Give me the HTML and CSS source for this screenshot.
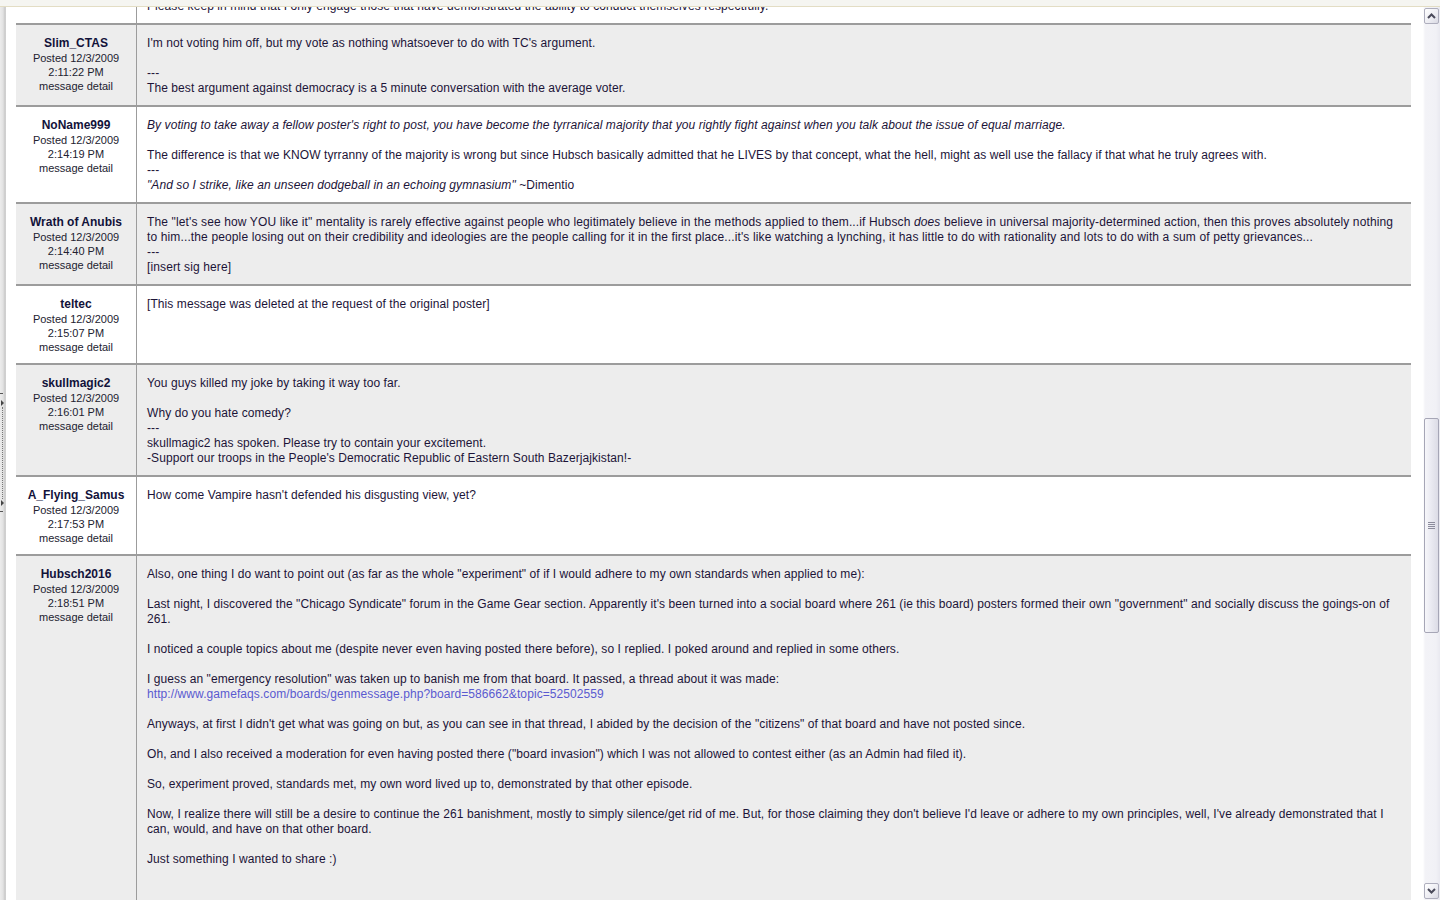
FILE: index.html
```html
<!DOCTYPE html>
<html>
<head>
<meta charset="utf-8">
<title>Board Messages</title>
<link rel="stylesheet" href="styles.css">
</head>
<body>
<div class="window">
  <div class="topbar"></div>
  <div class="main">
    <div class="gutter">
      <div class="grip">
        <span class="grip-dash"></span>
        <span class="grip-arrow"></span>
        <span class="grip-dots"></span>
        <span class="grip-arrow"></span>
        <span class="grip-dash"></span>
      </div>
    </div>
    <div class="content">
      <div class="board">
        <div class="post post-first">
          <div class="author"></div>
          <div class="msg">Please keep in mind that I only engage those that have demonstrated the ability to conduct themselves respectfully.</div>
        </div>

        <div class="post alt">
          <div class="author">
            <div class="name">Slim_CTAS</div>
            <div class="meta">Posted 12/3/2009</div>
            <div class="meta">2:11:22 PM</div>
            <div class="meta">message detail</div>
          </div>
          <div class="msg">I'm not voting him off, but my vote as nothing whatsoever to do with TC's argument.<br><br>---<br>The best argument against democracy is a 5 minute conversation with the average voter.</div>
        </div>

        <div class="post">
          <div class="author">
            <div class="name">NoName999</div>
            <div class="meta">Posted 12/3/2009</div>
            <div class="meta">2:14:19 PM</div>
            <div class="meta">message detail</div>
          </div>
          <div class="msg"><i>By voting to take away a fellow poster's right to post, you have become the tyrranical majority that you rightly fight against when you talk about the issue of equal marriage.</i><br><br>The difference is that we KNOW tyrranny of the majority is wrong but since Hubsch basically admitted that he LIVES by that concept, what the hell, might as well use the fallacy if that what he truly agrees with.<br>---<br><i>"And so I strike, like an unseen dodgeball in an echoing gymnasium"</i> ~Dimentio</div>
        </div>

        <div class="post alt">
          <div class="author">
            <div class="name">Wrath of Anubis</div>
            <div class="meta">Posted 12/3/2009</div>
            <div class="meta">2:14:40 PM</div>
            <div class="meta">message detail</div>
          </div>
          <div class="msg msg-wide">The "let's see how YOU like it" mentality is rarely effective against people who legitimately believe in the methods applied to them...if Hubsch <i>does</i> believe in universal majority-determined action, then this proves absolutely nothing to him...the people losing out on their credibility and ideologies are the people calling for it in the first place...it's like watching a lynching, it has little to do with rationality and lots to do with a sum of petty grievances...<br>---<br>[insert sig here]</div>
        </div>

        <div class="post">
          <div class="author">
            <div class="name">teltec</div>
            <div class="meta">Posted 12/3/2009</div>
            <div class="meta">2:15:07 PM</div>
            <div class="meta">message detail</div>
          </div>
          <div class="msg">[This message was deleted at the request of the original poster]</div>
        </div>

        <div class="post alt">
          <div class="author">
            <div class="name">skullmagic2</div>
            <div class="meta">Posted 12/3/2009</div>
            <div class="meta">2:16:01 PM</div>
            <div class="meta">message detail</div>
          </div>
          <div class="msg">You guys killed my joke by taking it way too far.<br><br>Why do you hate comedy?<br>---<br>skullmagic2 has spoken. Please try to contain your excitement.<br>-Support our troops in the People's Democratic Republic of Eastern South Bazerjajkistan!-</div>
        </div>

        <div class="post">
          <div class="author">
            <div class="name">A_Flying_Samus</div>
            <div class="meta">Posted 12/3/2009</div>
            <div class="meta">2:17:53 PM</div>
            <div class="meta">message detail</div>
          </div>
          <div class="msg">How come Vampire hasn't defended his disgusting view, yet?</div>
        </div>

        <div class="post alt post-last">
          <div class="author">
            <div class="name">Hubsch2016</div>
            <div class="meta">Posted 12/3/2009</div>
            <div class="meta">2:18:51 PM</div>
            <div class="meta">message detail</div>
          </div>
          <div class="msg">Also, one thing I do want to point out (as far as the whole "experiment" of if I would adhere to my own standards when applied to me):<br><br>Last night, I discovered the "Chicago Syndicate" forum in the Game Gear section. Apparently it's been turned into a social board where 261 (ie this board) posters formed their own "government" and socially discuss the goings-on of 261.<br><br>I noticed a couple topics about me (despite never even having posted there before), so I replied. I poked around and replied in some others.<br><br>I guess an "emergency resolution" was taken up to banish me from that board. It passed, a thread about it was made:<br><a href="#" class="link">http://www.gamefaqs.com/boards/genmessage.php?board=586662&amp;topic=52502559</a><br><br>Anyways, at first I didn't get what was going on but, as you can see in that thread, I abided by the decision of the "citizens" of that board and have not posted since.<br><br>Oh, and I also received a moderation for even having posted there ("board invasion") which I was not allowed to contest either (as an Admin had filed it).<br><br>So, experiment proved, standards met, my own word lived up to, demonstrated by that other episode.<br><br>Now, I realize there will still be a desire to continue the 261 banishment, mostly to simply silence/get rid of me. But, for those claiming they don't believe I'd leave or adhere to my own principles, well, I've already demonstrated that I can, would, and have on that other board.<br><br>Just something I wanted to share :)<br><br><br><br></div>
        </div>
      </div>
    </div>
    <div class="scrollbar">
      <div class="sb-btn">
        <svg width="9" height="6" viewBox="0 0 9 6"><path d="M1 5 L4.5 1.5 L8 5" fill="none" stroke="#4a4a5a" stroke-width="2"/></svg>
      </div>
      <div class="sb-track">
        <div class="sb-thumb">
          <span class="sb-grip"></span>
        </div>
      </div>
      <div class="sb-btn">
        <svg width="9" height="6" viewBox="0 0 9 6"><path d="M1 1 L4.5 4.5 L8 1" fill="none" stroke="#4a4a5a" stroke-width="2"/></svg>
      </div>
    </div>
  </div>
</div>
</body>
</html>
```

FILE: styles.css
```css
html, body {
  margin: 0;
  padding: 0;
  background: #ffffff;
}

body {
  font-family: "Liberation Sans", Arial, sans-serif;
  color: #1c1438;
}

.window {
  width: 1440px;
  height: 900px;
  display: flex;
  flex-direction: column;
  overflow: hidden;
}

.topbar {
  height: 6px;
  background: #f5f5f1;
  border-bottom: 1px solid #e3ddc4;
  flex: none;
}

.main {
  flex: 1;
  display: flex;
  min-height: 0;
}

.gutter {
  width: 6px;
  flex: none;
  background: linear-gradient(to right, #ececec 0, #e2e2e2 3px, #c9c9c9 5px, #d6d6d6 6px);
  display: flex;
  flex-direction: column;
}

.grip {
  margin-top: 386px;
  display: flex;
  flex-direction: column;
  align-items: flex-start;
}

.grip-dash {
  width: 3px;
  height: 1px;
  background: #555;
  margin-bottom: 6px;
}

.grip-arrow {
  width: 0;
  height: 0;
  margin-left: 1px;
  border-top: 3px solid transparent;
  border-bottom: 3px solid transparent;
  border-left: 3px solid #444;
}

.grip-dots {
  width: 0;
  height: 92px;
  margin-left: 2px;
  border-left: 1px dotted #777;
  margin-top: 1px;
  margin-bottom: 1px;
}

.grip-arrow + .grip-dash {
  margin-top: 5px;
  margin-bottom: 0;
}

.content {
  flex: 1;
  min-width: 0;
  overflow: hidden;
  padding: 0 12px 0 10px;
  background: #ffffff;
}

.board {
  margin-top: -19px;
}

.post {
  display: grid;
  grid-template-columns: 121px 1fr;
  border-top: 2px solid #9c9c9c;
  background: #ffffff;
}

.post.alt {
  background: #ededed;
}

.post-first {
  border-top: none;
}

.post-last {
  min-height: 420px;
}

.author {
  border-right: 1px solid #9c9c9c;
  padding: 11px 0 9px;
  text-align: center;
}

.name {
  font-size: 12px;
  font-weight: bold;
  line-height: 15px;
  color: #12123a;
}

.meta {
  font-size: 11px;
  line-height: 14px;
  color: #222230;
}

.msg {
  padding: 11px 10px 9px;
  font-size: 12px;
  line-height: 15px;
  letter-spacing: 0.08px;
  color: #1c1438;
}

.msg-wide {
  letter-spacing: 0.13px;
}

.link {
  color: #5a5ad0;
  text-decoration: none;
}

.scrollbar {
  width: 17px;
  flex: none;
  display: flex;
  flex-direction: column;
  padding: 1px 1px 1px 1px;
  box-sizing: border-box;
  background: linear-gradient(to right, #ffffff 0, #f3f3f7 2px, #f1f1f6 13px, #e9e9f0 17px);
}

.sb-btn {
  height: 16px;
  flex: none;
  box-sizing: border-box;
  border: 1px solid #aeaebd;
  border-radius: 2px;
  background: linear-gradient(to bottom right, #ffffff 0%, #ececf2 60%, #d9d9e3 100%);
  display: flex;
  align-items: center;
  justify-content: center;
}

.sb-track {
  flex: 1;
  display: flex;
  flex-direction: column;
}

.sb-thumb {
  margin-top: 394px;
  height: 215px;
  box-sizing: border-box;
  border: 1px solid #a6a6b6;
  border-radius: 2px;
  background: linear-gradient(to right, #f7f7fa 0, #ececf3 40%, #dcdce6 100%);
  display: flex;
  align-items: center;
  justify-content: center;
}

.sb-grip {
  width: 7px;
  height: 7px;
  background: repeating-linear-gradient(to bottom, #8c8c9c 0, #8c8c9c 1px, transparent 1px, transparent 2px);
}
```
